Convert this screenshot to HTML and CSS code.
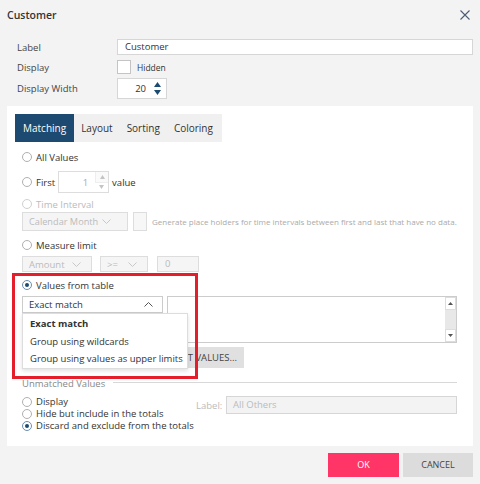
FILE: index.html
```html
<!DOCTYPE html>
<html>
<head>
<meta charset="utf-8">
<link rel="stylesheet" href="styles.css">
</head>
<body>
<div class="dialog">
  <header class="titlebar">
    <span class="title">Customer</span>
    <svg class="close" viewBox="0 0 10 10" width="10" height="10"><path d="M0.5 0.5 L9.5 9.5 M9.5 0.5 L0.5 9.5" stroke="#4a5d72" stroke-width="1.1" fill="none"/></svg>
  </header>

  <div class="props">
    <div class="prop-row row-label">
      <span class="prop-label">Label</span>
      <div class="text-input">Customer</div>
    </div>
    <div class="prop-row row-display">
      <span class="prop-label">Display</span>
      <span class="checkbox"></span>
      <span class="hidden-label">Hidden</span>
    </div>
    <div class="prop-row row-width">
      <span class="prop-label">Display Width</span>
      <div class="spinner">
        <span class="spin-value">20</span>
        <span class="spin-arrows">
          <svg viewBox="0 0 7 5" width="7" height="5"><path d="M3.5 0 L7 5 L0 5 Z" fill="#1d4a70"/></svg>
          <svg viewBox="0 0 7 5" width="7" height="5"><path d="M0 0 L7 0 L3.5 5 Z" fill="#1d4a70"/></svg>
        </span>
      </div>
    </div>
  </div>

  <section class="panel">
    <nav class="tabs">
      <span class="tab active">Matching</span>
      <span class="tab">Layout</span>
      <span class="tab">Sorting</span>
      <span class="tab">Coloring</span>
    </nav>

    <div class="options">
      <div class="opt-row row-all">
        <span class="radio"></span><span>All Values</span>
      </div>
      <div class="opt-row row-first">
        <span class="radio"></span><span>First</span>
        <div class="num-spin">
          <span class="num-value">1</span>
          <span class="num-arrows">
            <span class="num-btn"><svg viewBox="0 0 5 4" width="5" height="4"><path d="M2.5 0 L5 4 L0 4 Z" fill="#c4c4c4"/></svg></span>
            <span class="num-btn"><svg viewBox="0 0 5 4" width="5" height="4"><path d="M0 0 L5 0 L2.5 4 Z" fill="#c4c4c4"/></svg></span>
          </span>
        </div>
        <span class="after-spin">value</span>
      </div>
      <div class="opt-row row-time disabled">
        <span class="radio"></span><span>Time Interval</span>
      </div>
      <div class="opt-row row-cal">
        <div class="select dis sel-cal"><span>Calendar Month</span><svg class="chev" viewBox="0 0 9 5" width="9" height="5"><path d="M0.5 0.5 L4.5 4.5 L8.5 0.5" stroke="#c8c8c8" fill="none"/></svg></div>
        <span class="checkbox dis-box"></span>
        <span class="gen-text">Generate place holders for time intervals between first and last that have no data.</span>
      </div>
      <div class="opt-row row-measure">
        <span class="radio"></span><span>Measure limit</span>
      </div>
      <div class="opt-row row-amount">
        <div class="select dis sel-amount"><span>Amount</span><svg class="chev" viewBox="0 0 9 5" width="9" height="5"><path d="M0.5 0.5 L4.5 4.5 L8.5 0.5" stroke="#c8c8c8" fill="none"/></svg></div>
        <div class="select dis sel-op"><span>&gt;=</span><svg class="chev" viewBox="0 0 9 5" width="9" height="5"><path d="M0.5 0.5 L4.5 4.5 L8.5 0.5" stroke="#c8c8c8" fill="none"/></svg></div>
        <div class="dis-input">0</div>
      </div>
      <div class="opt-row row-vft">
        <span class="radio checked"></span><span>Values from table</span>
      </div>
      <div class="opt-row row-match">
        <div class="match-select">
          <div class="select sel-match"><span>Exact match</span><svg class="chev" viewBox="0 0 9 5" width="9" height="5"><path d="M0.5 4.5 L4.5 0.5 L8.5 4.5" stroke="#555" fill="none"/></svg></div>
          <ul class="menu">
            <li class="menu-item selected">Exact match</li>
            <li class="menu-item">Group using wildcards</li>
            <li class="menu-item">Group using values as upper limits</li>
          </ul>
        </div>
        <div class="textarea">
          <div class="scrollbar">
            <span class="sb-btn"><svg viewBox="0 0 5 3" width="5" height="3"><path d="M2.5 0 L5 3 L0 3 Z" fill="#555"/></svg></span>
            <span class="sb-track"></span>
            <span class="sb-btn"><svg viewBox="0 0 5 3" width="5" height="3"><path d="M0 0 L5 0 L2.5 3 Z" fill="#555"/></svg></span>
          </div>
        </div>
      </div>
      <div class="opt-row row-button">
        <span class="btn-select">SELECT VALUES...</span>
      </div>
      <div class="opt-row row-unmatched">
        <span class="legend">Unmatched Values</span>
        <span class="legend-line"></span>
      </div>
      <div class="unmatched">
        <div class="radio-list">
          <div class="small-row"><span class="radio"></span><span>Display</span></div>
          <div class="small-row"><span class="radio"></span><span>Hide but include in the totals</span></div>
          <div class="small-row"><span class="radio checked"></span><span>Discard and exclude from the totals</span></div>
        </div>
        <div class="label-field">
          <span class="label-cap">Label:</span>
          <div class="label-input">All Others</div>
        </div>
      </div>
    </div>

    <div class="highlight"></div>
  </section>

  <footer class="buttons">
    <span class="btn btn-ok">OK</span>
    <span class="btn btn-cancel">CANCEL</span>
  </footer>
</div>
</body>
</html>
```

FILE: styles.css
```css
* { box-sizing: border-box; }
html, body { margin: 0; padding: 0; }
body {
  width: 480px;
  height: 484px;
  background: #f3f3f3;
  font-family: "Open Sans", "Noto Sans", sans-serif;
  font-size: 9.5px;
  color: #333;
  overflow: hidden;
}
.dialog { display: flex; flex-direction: column; height: 484px; }

.titlebar {
  height: 30px;
  display: flex;
  align-items: center;
  justify-content: space-between;
  padding: 0 10px 0 7px;
}
.title { font-size: 10.5px; font-weight: 600; color: #333; }
.close { display: block; }

.props { display: flex; flex-direction: column; padding: 9px 7px 0 17px; }
.prop-row { display: flex; align-items: center; }
.prop-label { width: 100px; color: #444; }
.row-label { height: 16px; }
.text-input {
  flex: 1;
  height: 16px;
  border: 1px solid #d6d6d6;
  background: #fff;
  padding-left: 7px;
  line-height: 14px;
}
.row-display { height: 14px; margin-top: 5px; }
.checkbox {
  width: 14px;
  height: 14px;
  border: 1px solid #c4c4c4;
  background: #fff;
}
.hidden-label { margin-left: 6px; font-size: 8.5px; }
.row-width { height: 21px; margin-top: 4px; }
.spinner {
  width: 50px;
  height: 21px;
  border: 1px solid #d6d6d6;
  background: #fff;
  display: flex;
  align-items: center;
  justify-content: flex-end;
  padding-right: 5px;
}
.spin-value { margin-right: 8px; }
.spin-arrows { display: flex; flex-direction: column; gap: 3px; }
.spin-arrows svg { display: block; }

.panel {
  position: relative;
  margin: 7px 7px 0;
  height: 340px;
  background: #fff;
  padding: 8px 8px 0;
}
.tabs { display: flex; height: 28px; background: #f0f0f0; width: 207px; }
.tab { padding: 0 7px; line-height: 28px; font-size: 10px; color: #333; }
.tab.active { background: #1d4a70; color: #fff; padding: 0 8px; }

.options { display: flex; flex-direction: column; padding: 0 8px 0 7px; }
.opt-row { display: flex; align-items: center; white-space: nowrap; }
.radio {
  width: 10px;
  height: 10px;
  border: 1px solid #b0b0b0;
  border-radius: 50%;
  margin-right: 4px;
  background: #fff;
  flex: none;
  position: relative;
}
.radio.checked { border-color: #6a8fb0; }
.radio.checked::after {
  content: "";
  position: absolute;
  left: 2px;
  top: 2px;
  width: 4px;
  height: 4px;
  border-radius: 50%;
  background: #1d4a70;
}
.disabled { color: #bbb; }
.disabled .radio { border-color: #d0d0d0; }

.row-all { height: 18px; margin-top: 6px; }
.row-first { height: 22px; margin-top: 5px; }
.num-spin {
  width: 51px;
  height: 22px;
  margin-left: 3px;
  border: 1px solid #ddd;
  display: flex;
  align-items: center;
  justify-content: flex-end;
  color: #aaa;
}
.num-value { margin-right: 7px; }
.num-arrows { display: flex; flex-direction: column; width: 13px; height: 20px; }
.num-btn { flex: 1; display: flex; align-items: center; justify-content: center; }
.num-btn:first-child { border-left: 1px solid #eee; border-bottom: 1px solid #eee; background: #fafafa; }
.num-btn svg { display: block; }
.after-spin { margin-left: 3px; }

.row-time { height: 14px; margin-top: 4px; }
.row-cal { height: 19px; margin-top: 1px; }
.select {
  height: 100%;
  display: flex;
  align-items: center;
  justify-content: space-between;
  border: 1px solid #ddd;
  padding-left: 6px;
  white-space: nowrap;
}
.select.dis { background: #f5f5f5; color: #bbb; }
.chev { display: block; flex: none; }
.sel-cal { width: 106px; padding-right: 16px; }
.sel-cal span { font-size: 9.2px; }
.dis-box { width: 14px; height: 19px; margin-left: 5px; border-color: #ddd; background: #f7f7f7; }
.gen-text { margin-left: 5px; font-size: 8px; color: #aaa; white-space: nowrap; }

.row-measure { height: 14px; margin-top: 7px; }
.row-amount { height: 16px; margin-top: 4px; }
.sel-amount { width: 70px; padding-right: 10px; }
.sel-op { width: 48px; margin-left: 8px; padding-right: 10px; }
.dis-input {
  width: 42px;
  height: 16px;
  margin-left: 9px;
  border: 1px solid #ddd;
  background: #f5f5f5;
  color: #bbb;
  padding-left: 7px;
  line-height: 14px;
}

.row-vft { height: 14px; margin-top: 6px; }
.row-match { height: 47px; margin-top: 4px; align-items: flex-start; }
.match-select { position: relative; width: 141px; height: 17px; }
.sel-match { background: #fff; border-color: #ccc; padding-right: 9px; height: 17px; }
.menu {
  position: absolute;
  left: 0;
  top: 17px;
  width: 166px;
  margin: 0;
  padding: 1px 0 0;
  list-style: none;
  background: #fff;
  border: 1px solid #ddd;
  box-shadow: 0 2px 4px rgba(0, 0, 0, 0.12);
  z-index: 3;
}
.menu-item { height: 17.5px; line-height: 17.5px; padding-left: 7px; white-space: nowrap; }
.menu-item.selected { font-weight: 700; }
.textarea {
  margin-left: 4px;
  flex: 1;
  height: 47px;
  border: 1px solid #ccc;
  background: #fff;
  display: flex;
  justify-content: flex-end;
}
.scrollbar { width: 11px; display: flex; flex-direction: column; background: #e8e8e8; }
.sb-btn {
  height: 13px;
  background: #fff;
  border: 1px solid #ddd;
  display: flex;
  align-items: center;
  justify-content: center;
}
.sb-btn svg { display: block; }
.sb-track { flex: 1; }

.row-button { height: 21px; margin-top: 4px; }
.btn-select {
  margin-left: 130px;
  width: 92px;
  height: 21px;
  background: #e0e0e0;
  color: #444;
  line-height: 21px;
  text-align: right;
  padding-right: 7px;
  font-size: 9.5px;
}

.row-unmatched { height: 14px; margin-top: 8px; }
.legend { color: #888; }
.legend-line { flex: 1; height: 1px; background: #d8d8d8; margin-left: 8px; margin-top: -2px; }

.unmatched { display: flex; margin-top: 6px; }
.radio-list { display: flex; flex-direction: column; width: 174px; }
.small-row { display: flex; align-items: center; height: 12px; line-height: 12px; white-space: nowrap; }
.label-field { flex: 1; display: flex; align-items: center; height: 18px; }
.label-cap { color: #bbb; width: 30px; }
.label-input {
  flex: 1;
  height: 18px;
  border: 1px solid #d6d6d6;
  background: #f3f3f3;
  color: #bbb;
  padding-left: 6px;
  line-height: 16px;
}

.highlight {
  position: absolute;
  left: 5px;
  top: 167px;
  width: 186px;
  height: 106px;
  border: 3px solid #e41e2a;
  z-index: 4;
  pointer-events: none;
}

.buttons { display: flex; justify-content: flex-end; gap: 4px; padding: 7px 7px 0; }
.btn {
  height: 24px;
  line-height: 24px;
  text-align: center;
  font-size: 9px;
}
.btn-ok { width: 71px; background: #ff3567; color: #fff; }
.btn-cancel { width: 70px; background: #dcdcdc; color: #444; }
```
